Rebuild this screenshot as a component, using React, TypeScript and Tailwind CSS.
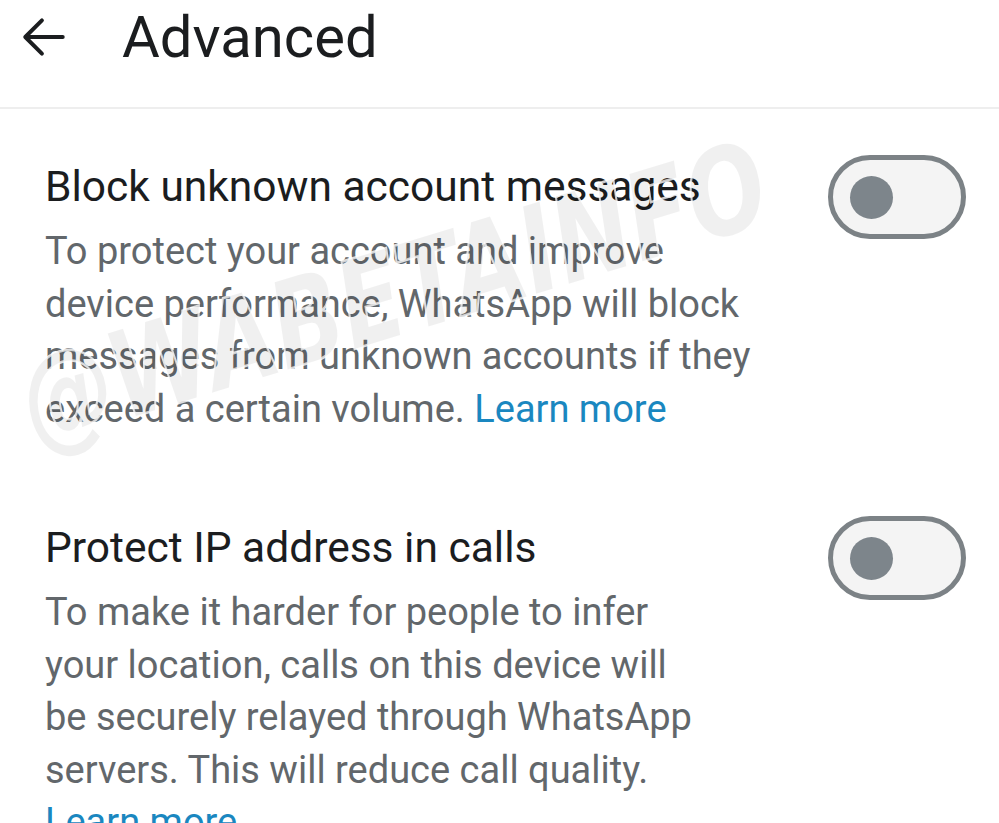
import React from "react";

function Toggle() {
  return (
    <div className="mt-[-6px] flex h-[84px] w-[138px] shrink-0 items-center rounded-full border-[5px] border-[#7c8286] bg-[#f4f4f4] pl-[17px]">
      <div className="h-[43px] w-[43px] rounded-full bg-[#7d858b]" />
    </div>
  );
}

function Setting({ title, lines }: { title: string; lines: React.ReactNode[] }) {
  return (
    <div className="flex justify-between pl-[45px] pr-[33px]">
      <div className="w-[740px]">
        <div className="text-[42.5px] leading-[52px] text-[#1b1d1f]">{title}</div>
        <div className="mt-[12px] text-[38px] leading-[52.5px] text-[#62676b]">
          {lines.map((l, i) => (
            <div key={i} className="whitespace-nowrap">
              {l}
            </div>
          ))}
        </div>
      </div>
      <Toggle />
    </div>
  );
}

const learn = <span className="text-[#1a87c0]">Learn more</span>;

export default function App() {
  return (
    <div className="relative h-[823px] w-[999px] overflow-hidden bg-white font-['Roboto',sans-serif]">
      <header className="flex h-[109px] items-center border-b-2 border-[#eeeeee] pb-[34px]">
        <svg className="ml-[19px] h-[50px] w-[50px]" viewBox="0 0 24 24" fill="none" stroke="#1b1d1f" strokeWidth="1.9" strokeLinecap="round" strokeLinejoin="round">
          <path d="M21 12H3.5M11 4l-8 8 8 8" />
        </svg>
        <h1 className="ml-[53px] text-[58px] leading-none text-[#1b1d1f]">Advanced</h1>
      </header>

      <div className="pt-[52px]">
        <Setting
          title="Block unknown account messages"
          lines={[
            "To protect your account and improve",
            "device performance, WhatsApp will block",
            "messages from unknown accounts if they",
            <>exceed a certain volume. {learn}</>,
          ]}
        />
        <div className="h-[87px]" />
        <Setting
          title="Protect IP address in calls"
          lines={[
            "To make it harder for people to infer",
            "your location, calls on this device will",
            "be securely relayed through WhatsApp",
            "servers. This will reduce call quality.",
            learn,
          ]}
        />
      </div>

      <div className="pointer-events-none absolute left-[24px] top-[362px] origin-left -rotate-[17deg] scale-y-[1.3] select-none font-['DejaVu_Sans',sans-serif] text-[92px] font-bold italic leading-none text-black/[0.06] [-webkit-text-stroke:2px_rgba(255,255,255,0.8)] [paint-order:stroke_fill]">
        @WABETAINFO
      </div>
    </div>
  );
}
